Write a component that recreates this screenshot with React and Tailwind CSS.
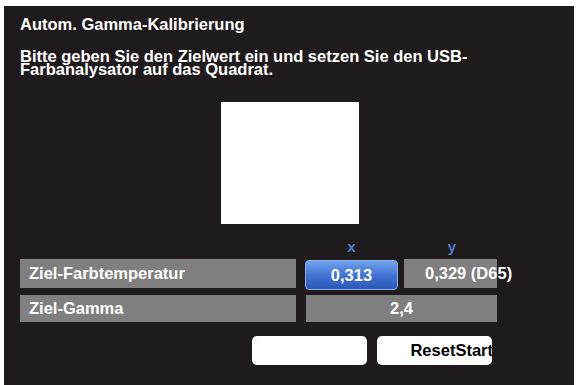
export default function App() {
  return (
    <div className="w-[578px] h-[385px] bg-white pt-[6px] px-[4px] overflow-hidden" style={{ fontFamily: '"Liberation Sans", Arial, sans-serif' }}>
      <div className="h-full bg-[#1f1b1c] pl-[16px] pt-[9px] text-white">
        <h1 className="text-[16.5px] leading-[19px] font-bold">Autom. Gamma-Kalibrierung</h1>
        <p className="mt-[16px] text-[16.5px] leading-[13px] font-bold w-[500px]">
          Bitte geben Sie den Zielwert ein und setzen Sie den USB-
          <br />
          Farbanalysator auf das Quadrat.
        </p>
        <div className="mt-[26px] ml-[201px] w-[138px] h-[122px] bg-white" />
        <div className="mt-[14px] grid grid-cols-[276px_93px_93px] gap-x-[9px] w-[490px]">
          <div />
          <div className="text-center text-[15px] leading-[18px] font-bold text-[#4f7fd4]">x</div>
          <div className="text-center text-[15px] leading-[18px] font-bold text-[#4f7fd4] -ml-[3px]">y</div>
        </div>
        <div className="mt-[3px] flex flex-col gap-[5px]">
          <div className="flex items-start">
            <div className="w-[276px] h-[29px] bg-[#7f7f7f] pl-[9px] flex items-center text-[16.5px] font-bold">Ziel-Farbtemperatur</div>
            <div className="ml-[9px] mt-[1px] w-[93px] h-[30px] rounded-[4px] border border-[#86aef0] bg-gradient-to-b from-[#72a3ec] via-[#4274d4] to-[#2b57b6] flex items-center justify-center text-[16.5px] font-bold">0,313</div>
            <div className="ml-[6px] w-[93px] h-[29px] bg-[#7f7f7f] pl-[21px] flex items-center text-[16.5px] font-bold whitespace-nowrap">0,329 (D65)</div>
          </div>
          <div className="flex">
            <div className="w-[276px] h-[27px] bg-[#7f7f7f] pl-[9px] flex items-center text-[16.5px] font-bold">Ziel-Gamma</div>
            <div className="ml-[10px] w-[191px] h-[27px] bg-[#7f7f7f] flex items-center justify-center text-[16.5px] font-bold">2,4</div>
          </div>
        </div>
        <div className="mt-[14px] ml-[232px] flex gap-[10px]">
          <div className="w-[115px] h-[29px] bg-white rounded-[5px]" />
          <div className="w-[115px] h-[29px] bg-white rounded-[5px] flex items-center justify-end overflow-hidden text-black text-[16.5px] font-bold whitespace-nowrap">
            <span className="-mr-[1px]">ResetStart</span>
          </div>
        </div>
      </div>
    </div>
  );
}
